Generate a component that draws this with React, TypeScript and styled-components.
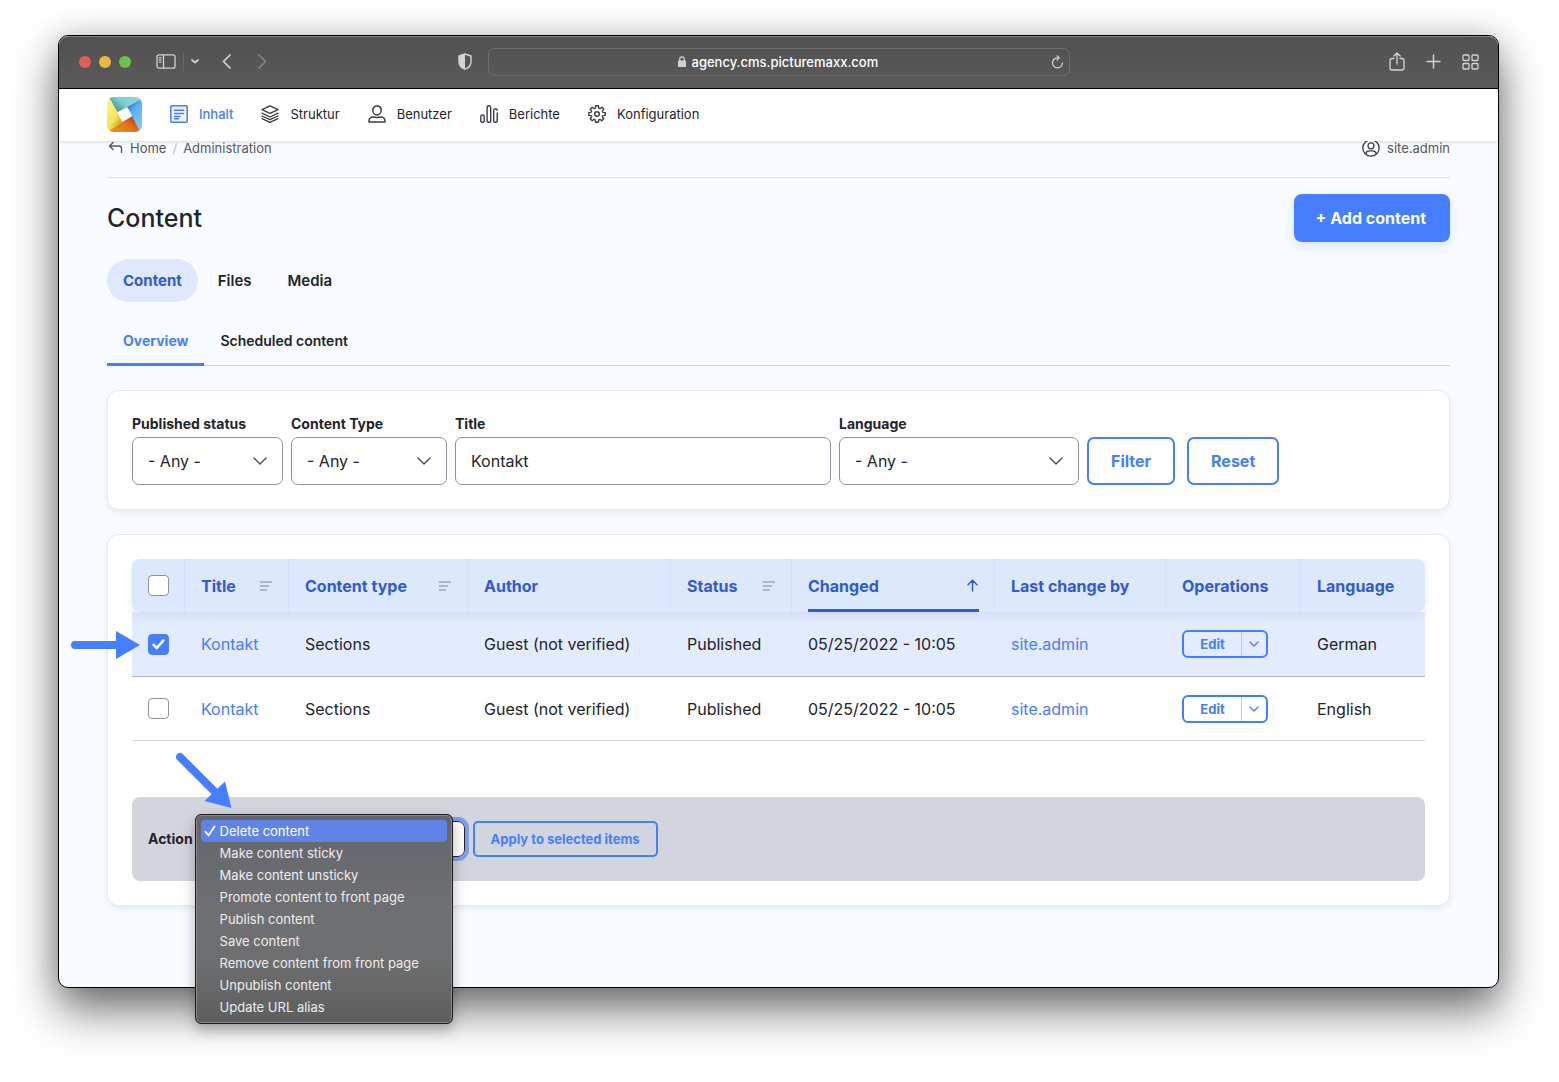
import React, { useState } from "react";
import styled, { createGlobalStyle, css } from "styled-components";

const blue = "#457eff";
const deepBlue = "#3059d6";
const ink = "#232429";

const GlobalStyle = createGlobalStyle`
  *, *::before, *::after { box-sizing: border-box; }
  body {
    margin: 0;
    background: #fff;
    color: ${ink};
    font-family: Inter, "Noto Sans", "Liberation Sans", sans-serif;
    font-size: 16px;
  }
  a { color: inherit; text-decoration: none; }
  button, input, select { font: inherit; color: inherit; }
  button { cursor: pointer; }
  svg { display: block; flex: none; }
`;

const Desktop = styled.div`
  padding: 35px 60px 94px 58px;
`;

const BrowserWindow = styled.div`
  border: 1px solid #000;
  border-radius: 10px;
  background: #f8fbff;
  box-shadow: 0 22px 46px rgba(0, 0, 0, 0.56), 0 0 30px rgba(0, 0, 0, 0.14);
`;

/* Browser chrome */

const Toolbar = styled.div`
  display: grid;
  grid-template-columns: 1fr minmax(300px, 582px) 1fr;
  align-items: center;
  height: 53px;
  padding-bottom: 1px;
  border-bottom: 1px solid #000;
  border-radius: 9px 9px 0 0;
  background: linear-gradient(#505050, #5b5b5b);
  box-shadow: inset 0 1px 0 #858585;
  color: #d4d4d4;
`;

const ToolbarStart = styled.div`
  display: flex;
  align-items: center;
  padding: 0 16px 0 20px;
`;

const Lights = styled.div`
  display: flex;
  gap: 8px;
  margin-right: 25px;
`;

const Light = styled.button<{ $color: string }>`
  width: 12px;
  height: 12px;
  padding: 0;
  border: 0;
  border-radius: 50%;
  background: ${(p) => p.$color};
`;

const IconButton = styled.button<{ $dim?: boolean }>`
  padding: 0;
  border: 0;
  background: none;
  color: ${(p) => (p.$dim ? "#858585" : "inherit")};
`;

const SidebarGroup = styled.div`
  display: flex;
  align-items: center;
  gap: 7px;
  margin-right: 22px;
`;

const Separator = styled.span`
  width: 1px;
  height: 18px;
  background: #6a6a6a;
`;

const HistoryGroup = styled.div`
  display: flex;
  gap: 25px;
  margin-right: auto;
`;

const AddressBar = styled.div`
  display: grid;
  grid-template-columns: 1fr auto 1fr;
  align-items: center;
  height: 28px;
  padding: 0 5px;
  border: 1px solid #6e6e6e;
  border-radius: 7px;
`;

const AddressCore = styled.label`
  grid-column: 2;
  display: flex;
  align-items: center;
  gap: 6px;
`;

const AddressInput = styled.input`
  width: 188px;
  padding: 0;
  border: 0;
  outline: 0;
  background: none;
  color: #fff;
  font-size: 13px;
  font-weight: 500;
  line-height: 18px;
`;

const ReloadButton = styled(IconButton)`
  justify-self: end;
`;

const ToolbarEnd = styled.div`
  display: flex;
  justify-content: flex-end;
  align-items: center;
  gap: 21px;
  padding-right: 19px;
`;

/* Admin navigation */

const AdminNav = styled.nav`
  position: relative;
  z-index: 1;
  display: flex;
  align-items: center;
  gap: 28px;
  height: 52px;
  padding: 0 48px 2px;
  background: #fff;
  box-shadow: 0 1px 3px rgba(20, 30, 60, 0.16);
`;

const NavItem = styled.a<{ $active?: boolean }>`
  display: flex;
  align-items: center;
  gap: 11px;
  color: ${(p) => (p.$active ? blue : ink)};
  font-size: 13px;
  font-weight: ${(p) => (p.$active ? 500 : 400)};
  svg { color: ${(p) => (p.$active ? blue : "#3c3d44")}; }
`;

/* Page */

const Page = styled.main`
  padding: 0 48px 81px;
`;

const TopLine = styled.div`
  display: flex;
  justify-content: space-between;
  align-items: center;
  margin-top: -4px;
  padding-bottom: 18px;
  border-bottom: 1px solid #dfe1e7;
  color: #55565e;
  font-size: 13px;
  line-height: 22px;
`;

const Crumbs = styled.nav`
  display: flex;
  align-items: center;
  gap: 6px;
`;

const Slash = styled.span`
  color: #bfc1c8;
`;

const UserLink = styled.a`
  display: flex;
  align-items: center;
  gap: 7px;
`;

const TitleRow = styled.div`
  display: flex;
  justify-content: space-between;
  align-items: center;
  padding: 16px 0 17px;
`;

const PageTitle = styled.h1`
  margin: 0;
  font-size: 25px;
  font-weight: 500;
  line-height: 34px;
`;

const PrimaryButton = styled.button`
  height: 48px;
  padding: 0 24px 0 22px;
  border: 0;
  border-radius: 8px;
  background: ${blue};
  box-shadow: 0 4px 10px rgba(69, 126, 255, 0.18);
  color: #fff;
  font-weight: 700;
`;

const Pills = styled.nav`
  display: flex;
  gap: 4px;
`;

const Pill = styled.a<{ $active?: boolean }>`
  padding: 0 16px;
  border-radius: 22px;
  background: ${(p) => (p.$active ? "#dfe8ff" : "transparent")};
  color: ${(p) => (p.$active ? deepBlue : ink)};
  font-size: 15px;
  font-weight: ${(p) => (p.$active ? 700 : 600)};
  line-height: 43px;
`;

const Tabs = styled.nav`
  display: flex;
  margin: 16px 0 24px;
  box-shadow: inset 0 -1px 0 #cfd2da;
`;

const Tab = styled.a<{ $active?: boolean }>`
  height: 48px;
  padding: 0 16px;
  border-bottom: 3px solid ${(p) => (p.$active ? blue : "transparent")};
  color: ${(p) => (p.$active ? blue : ink)};
  font-size: 14px;
  font-weight: ${(p) => (p.$active ? 700 : 600)};
  line-height: 46px;
`;

const Card = styled.section`
  padding: 24px;
  border: 1px solid #e8eaf0;
  border-radius: 12px;
  background: #fff;
  box-shadow: 0 3px 6px rgba(40, 60, 110, 0.08);
  & + & { margin-top: 24px; }
`;

const FilterForm = styled.form`
  display: flex;
  align-items: flex-end;
  gap: 8px;
`;

const Field = styled.div<{ $width: number }>`
  display: flex;
  flex-direction: column;
  gap: 4px;
  flex: 0 1 ${(p) => p.$width}px;
`;

const FieldLabel = styled.label`
  font-size: 14px;
  font-weight: 700;
  line-height: 18px;
  white-space: nowrap;
`;

const control = css`
  width: 100%;
  height: 48px;
  padding: 0 15px;
  border: 1px solid #8e929c;
  border-radius: 7px;
  background: #fff;
  outline: 0;
`;

const TextInput = styled.input`
  ${control}
`;

const SelectBox = styled.div`
  display: grid;
  align-items: center;
  & > * { grid-area: 1 / 1; }
  & > svg { justify-self: end; margin-right: 16px; pointer-events: none; color: #55565e; }
`;

const Select = styled.select`
  ${control}
  appearance: none;
`;

const OutlineButton = styled.button<{ $small?: boolean }>`
  height: ${(p) => (p.$small ? 36 : 48)}px;
  padding: 0 ${(p) => (p.$small ? 16 : 22)}px;
  border: 2px solid ${blue};
  border-radius: ${(p) => (p.$small ? 5 : 7)}px;
  background: ${(p) => (p.$small ? "transparent" : "#fff")};
  color: ${blue};
  font-size: ${(p) => (p.$small ? 13 : 16)}px;
  font-weight: 700;
  white-space: nowrap;
`;

const ButtonPair = styled.div`
  display: flex;
  gap: 12px;
`;

/* Table */

const Table = styled.table`
  width: 100%;
  table-layout: fixed;
  border-collapse: separate;
  border-spacing: 0;
  thead {
    position: relative;
    z-index: 1;
  }
`;

const Col = styled.col<{ $width?: number }>`
  width: ${(p) => (p.$width ? `${p.$width}px` : "auto")};
`;

const HeadRow = styled.tr`
  border-radius: 8px;
  box-shadow: 0 4px 8px rgba(60, 80, 150, 0.1);
`;

const HeadCell = styled.th`
  height: 53px;
  padding: 0 15px 0 16px;
  border-left: 1px solid #d3e0f8;
  background: #dce9fd;
  color: ${deepBlue};
  font-weight: 700;
  text-align: left;
  white-space: nowrap;
  &:first-child { border-left-color: #dce9fd; border-radius: 8px 0 0 8px; padding-left: 15px; }
  &:last-child { border-radius: 0 8px 8px 0; }
`;

const SortLink = styled.a<{ $sorted?: boolean }>`
  display: flex;
  justify-content: space-between;
  align-items: center;
  height: 53px;
  border-top: 3px solid transparent;
  border-bottom: 3px solid ${(p) => (p.$sorted ? deepBlue : "transparent")};
`;

const BodyRow = styled.tr<{ $selected: boolean }>`
  background: ${(p) => (p.$selected ? "#e3ebff" : "#fff")};
  td { border-bottom: 1px solid ${(p) => (p.$selected ? "#b3b6c0" : "#d5d6db")}; }
  &:first-child td { height: 65px; }
`;

const Cell = styled.td`
  position: relative;
  height: 64px;
  padding: 0 0 0 17px;
  white-space: nowrap;
  &:first-child { padding-left: 16px; }
`;

const CellLink = styled.a`
  color: ${blue};
`;

const Checkbox = styled.input`
  display: block;
  appearance: none;
  width: 21px;
  height: 21px;
  margin: 0;
  border: 1px solid #8e929c;
  border-radius: 4px;
  background: #fff;
  &:checked { border-color: ${blue}; background: ${blue}; }
`;

const CheckStack = styled.span`
  display: grid;
  width: 21px;
  & > * { grid-area: 1 / 1; }
  & > svg { place-self: center; pointer-events: none; color: #fff; }
`;

const SplitButton = styled.div`
  display: inline-flex;
  height: 28px;
  border: 2px solid ${blue};
  border-radius: 6px;
  color: ${blue};
  vertical-align: middle;
`;

const SplitMain = styled.button`
  width: 57px;
  padding: 0;
  border: 0;
  background: none;
  font-size: 13px;
  font-weight: 700;
`;

const SplitToggle = styled.button`
  display: grid;
  place-items: center;
  width: 25px;
  padding: 0;
  border: 0;
  border-left: 1px solid #b3c8fb;
  background: none;
`;

const RowArrow = styled.svg`
  position: absolute;
  left: -61px;
  top: 19px;
`;

/* Bulk actions */

const BulkForm = styled.form`
  position: relative;
  display: flex;
  align-items: center;
  gap: 8px;
  margin-top: 56px;
  padding: 24px 16px;
  border-radius: 8px;
  background: #d3d5de;
`;

const BulkArrow = styled.svg`
  position: absolute;
  left: 42px;
  top: -46px;
  z-index: 3;
`;

const BulkField = styled.div`
  position: relative;
`;

const BulkSelect = styled.select`
  display: block;
  appearance: none;
  width: 264px;
  height: 36px;
  padding: 0 14px;
  border: 1px solid ${ink};
  border-radius: 7px;
  outline: 4px solid #7c9fec;
  outline-offset: 0;
  background: #fff;
  font-size: 13px;
`;

const Menu = styled.div`
  position: absolute;
  z-index: 2;
  left: -6px;
  top: -7px;
  width: 258px;
  padding: 5px;
  border: 1px solid #1c1c1e;
  border-radius: 6px;
  background: linear-gradient(#64666d, #6f7072 50%, #6d6e6f 70%, #5e5e5e);
  box-shadow: inset 0 0 0 1px #8a8a8c, 0 6px 14px rgba(0, 0, 0, 0.28);
`;

const MenuOption = styled.button<{ $active: boolean }>`
  display: grid;
  grid-template-columns: 16px 1fr;
  align-items: center;
  width: 100%;
  height: 22px;
  padding: 0 3px;
  border: 0;
  border-radius: 4px;
  background: ${(p) => (p.$active ? "#6084e6" : "none")};
  color: ${(p) => (p.$active ? "#fff" : "#ececec")};
  font-size: 13px;
  text-align: left;
  span { grid-column: 2; white-space: nowrap; }
  svg { grid-column: 1; grid-row: 1; }
`;

/* Icons */

type StrokeProps = { w: number; h: number; d: string; sw?: number };

const Stroke = ({ w, h, d, sw = 1.5 }: StrokeProps) => (
  <svg width={w} height={h} viewBox={`0 0 ${w} ${h}`} fill="none" stroke="currentColor" strokeWidth={sw} strokeLinecap="round" strokeLinejoin="round" aria-hidden="true">
    <path d={d} />
  </svg>
);

const Logo = () => (
  <svg width="35" height="35" viewBox="0 0 105 105" role="img" aria-label="picturemaxx">
    <defs>
      <clipPath id="logoClip"><rect width="105" height="105" rx="20" /></clipPath>
      <linearGradient id="lgTeal" x1="0.1" y1="0.6" x2="0.9" y2="0.2"><stop offset="0" stopColor="#3f8f96" /><stop offset="0.45" stopColor="#7fcfd1" /><stop offset="1" stopColor="#86d6d8" /></linearGradient>
      <linearGradient id="lgBlue" x1="0.2" y1="0" x2="0.6" y2="0.8"><stop offset="0" stopColor="#2458a8" /><stop offset="0.45" stopColor="#5aaef5" /><stop offset="1" stopColor="#74c4ff" /></linearGradient>
      <linearGradient id="lgOrange" x1="0.95" y1="0.2" x2="0.2" y2="0.7"><stop offset="0" stopColor="#b63d10" /><stop offset="0.5" stopColor="#e2701b" /><stop offset="1" stopColor="#e98a20" /></linearGradient>
      <linearGradient id="lgYellow" x1="0.7" y1="0.9" x2="0.2" y2="0.2"><stop offset="0" stopColor="#cda51c" /><stop offset="0.4" stopColor="#f7e257" /><stop offset="1" stopColor="#fbf07c" /></linearGradient>
    </defs>
    <g clipPath="url(#logoClip)">
      <path d="M0 0H105V8L60 32L31 45L8 6Z" fill="url(#lgTeal)" />
      <path d="M105 6V105H97L74 57L60 31Z" fill="url(#lgBlue)" />
      <path d="M99 105H0V105L8 100L45 76L75 57Z" fill="url(#lgOrange)" />
      <path d="M0 105V0H5L31 44L46 75L8 100Z" fill="url(#lgYellow)" />
      <path d="M36 44L58 32Q61 31 63 34L74 54Q75 58 72 60L50 72Q46 74 44 71L34 50Q32 46 36 44Z" fill="#fff" />
    </g>
  </svg>
);

const ContentIcon = () => (
  <svg width="18" height="18" viewBox="0 0 18 18" fill="none" stroke="currentColor" strokeWidth="1.5" strokeLinecap="round" aria-hidden="true">
    <rect x="0.8" y="0.8" width="16.4" height="16.4" rx="1" fill="#eef3ff" />
    <path d="M4.5 5.2h9M4.5 8.4h9M4.5 11.4h5.5M4.5 13.8h4" />
  </svg>
);

const GearIcon = () => {
  const pts: string[] = [];
  for (let i = 0; i < 8; i++) {
    const a = (i * Math.PI) / 4;
    const at = (r: number, t: number) => `${(9 + r * Math.sin(t)).toFixed(2)} ${(9 - r * Math.cos(t)).toFixed(2)}`;
    pts.push(`${at(8.3, a - 0.17)} L${at(8.3, a + 0.17)} L${at(6.3, a + 0.27)} Q${at(5.7, a + 0.393)} ${at(6.3, a + 0.515)}`);
  }
  return (
    <svg width="18" height="18" viewBox="0 0 18 18" fill="none" stroke="currentColor" strokeWidth="1.4" strokeLinejoin="round" aria-hidden="true">
      <path d={`M${pts.join(" L")} Z`} />
      <circle cx="9" cy="9" r="2.3" />
    </svg>
  );
};

const UserIcon = () => (
  <svg width="18" height="18" viewBox="0 0 18 18" fill="none" stroke="#3c3d44" strokeWidth="1.3" aria-hidden="true">
    <circle cx="9" cy="9" r="8.2" />
    <circle cx="9" cy="6.8" r="3" />
    <path d="M3.6 15c.6-2.500 2-3.200 3.600-3.200h3.600c1.600 0 3 .7 3.600 3.200" />
  </svg>
);

const chevron = "M1 1L7 7L13 1";

const SortIcon = () => (
  <svg width="14" height="10" viewBox="0 0 14 10" stroke="#9fa8b8" strokeWidth="1.6" aria-hidden="true">
    <path d="M0.800 1H13M0.800 5H10M0.800 9H8" />
  </svg>
);

/* Data */

const navItems = [
  { label: "Inhalt", icon: <ContentIcon />, active: true },
  { label: "Struktur", icon: <Stroke w={18} h={18} sw={1.3} d="M9 0.800L17 4.600L9 8.400L1 4.600ZM1 8.200L9 12L17 8.200M1 11L9 14.700L17 11M1 13.700L9 17.300L17 13.700" /> },
  { label: "Benutzer", icon: <Stroke w={18} h={18} sw={1.5} d="M9 1C6.400 1 4.800 2.900 4.800 5.300C4.800 7.900 6.600 10 9 10C11.400 10 13.200 7.900 13.200 5.300C13.200 2.900 11.600 1 9 1ZM1 17V15.800C1 13.600 2.800 12 5 12C6.500 12 7.500 12.600 9 12.600C10.500 12.600 11.500 12 13 12C15.200 12 17 13.600 17 15.800V17Z" /> },
  { label: "Berichte", icon: <Stroke w={18} h={18} sw={1.4} d="M0.800 16V11.700A1.700 1.700 0 0 1 4.200 11.700V16A1.200 1.200 0 0 1 3 17.200H2A1.200 1.200 0 0 1 0.800 16ZM7.100 16V2.500A1.800 1.800 0 0 1 10.700 2.500V16A1.200 1.200 0 0 1 9.500 17.200H8.300A1.200 1.200 0 0 1 7.100 16ZM17.200 5.200A1.700 1.700 0 0 0 13.700 6V16A1.200 1.200 0 0 0 14.900 17.200H16A1.200 1.200 0 0 0 17.200 16V8" /> },
  { label: "Konfiguration", icon: <GearIcon /> },
];

const columns: { label: string; width?: number; sort?: "none" | "asc" }[] = [
  { label: "Title", width: 104, sort: "none" },
  { label: "Content type", width: 179, sort: "none" },
  { label: "Author", width: 203 },
  { label: "Status", width: 121, sort: "none" },
  { label: "Changed", width: 203, sort: "asc" },
  { label: "Last change by", width: 171 },
  { label: "Operations", width: 135 },
  { label: "Language" },
];

const rows = ["German", "English"];

const actions = [
  "Delete content",
  "Make content sticky",
  "Make content unsticky",
  "Promote content to front page",
  "Publish content",
  "Save content",
  "Remove content from front page",
  "Unpublish content",
  "Update URL alias",
];

const AnySelect = ({ id, label, width }: { id: string; label: string; width: number }) => (
  <Field $width={width}>
    <FieldLabel htmlFor={id}>{label}</FieldLabel>
    <SelectBox>
      <Select id={id}><option>- Any -</option></Select>
      <Stroke w={14} h={8} sw={1.5} d={chevron} />
    </SelectBox>
  </Field>
);

const BrowserToolbar = () => (
  <Toolbar>
    <ToolbarStart>
      <Lights>
        <Light $color="#e25f57" aria-label="Close" />
        <Light $color="#ecb83e" aria-label="Minimize" />
        <Light $color="#6dc44d" aria-label="Zoom" />
      </Lights>
      <SidebarGroup>
        <IconButton aria-label="Sidebar">
          <Stroke w={20} h={15} sw={1.3} d="M3 0.800H17A2 2 0 0 1 19 2.800V12.200A2 2 0 0 1 17 14.200H3A2 2 0 0 1 1 12.200V2.800A2 2 0 0 1 3 0.800ZM7.500 1V14M3.300 3.700H5M3.300 5.900H5M3.300 8.100H5" />
        </IconButton>
        <Separator />
        <IconButton aria-label="Tab groups"><Stroke w={8} h={5} sw={1.7} d="M1 1L4 3.700L7 1" /></IconButton>
      </SidebarGroup>
      <HistoryGroup>
        <IconButton aria-label="Back"><Stroke w={11} h={15} sw={1.7} d="M9 1L2.500 7.500L9 14" /></IconButton>
        <IconButton aria-label="Forward" $dim><Stroke w={11} h={15} sw={1.7} d="M2 1L8.500 7.500L2 14" /></IconButton>
      </HistoryGroup>
      <IconButton aria-label="Privacy report">
        <svg width="14" height="17" viewBox="0 0 14 17" aria-hidden="true">
          <path d="M7 1L13 3V9C13 12.500 10 15 7 16.200C4 15 1 12.500 1 9V3Z" fill="none" stroke="currentColor" strokeWidth="1.400" strokeLinejoin="round" />
          <path d="M7 1L1 3V9C1 12.500 4 15 7 16.200Z" fill="currentColor" />
        </svg>
      </IconButton>
    </ToolbarStart>
    <AddressBar>
      <AddressCore>
        <svg width="8" height="11" viewBox="0 0 8 11" aria-hidden="true">
          <rect x="0" y="4.500" width="8" height="6.500" rx="1" fill="currentColor" />
          <path d="M1.800 5V3A2.200 2.200 0 0 1 6.200 3V5" fill="none" stroke="currentColor" strokeWidth="1.200" />
        </svg>
        <AddressInput aria-label="Address" defaultValue="agency.cms.picturemaxx.com" />
      </AddressCore>
      <ReloadButton aria-label="Reload">
        <Stroke w={13} h={14} sw={1.2} d="M6.500 2.800A5 5 0 1 0 11.500 7.800M6 0.800L8.300 2.900L6 5.200" />
      </ReloadButton>
    </AddressBar>
    <ToolbarEnd>
      <IconButton aria-label="Share"><Stroke w={16} h={20} sw={1.3} d="M5 6.500H3A2 2 0 0 0 1 8.500V16A2 2 0 0 0 3 18H13A2 2 0 0 0 15 16V8.500A2 2 0 0 0 13 6.500H11M8 12V1M4.800 4L8 1L11.200 4" /></IconButton>
      <IconButton aria-label="New tab"><Stroke w={15} h={15} sw={1.5} d="M7.500 1V14M1 7.500H14" /></IconButton>
      <IconButton aria-label="Tab overview"><Stroke w={17} h={16} sw={1.3} d="M2 1H6A1 1 0 0 1 7 2V5.500A1 1 0 0 1 6 6.500H2A1 1 0 0 1 1 5.500V2A1 1 0 0 1 2 1ZM11 1H15A1 1 0 0 1 16 2V5.500A1 1 0 0 1 15 6.500H11A1 1 0 0 1 10 5.500V2A1 1 0 0 1 11 1ZM2 9.500H6A1 1 0 0 1 7 10.500V14A1 1 0 0 1 6 15H2A1 1 0 0 1 1 14V10.500A1 1 0 0 1 2 9.500ZM11 9.500H15A1 1 0 0 1 16 10.500V14A1 1 0 0 1 15 15H11A1 1 0 0 1 10 14V10.500A1 1 0 0 1 11 9.500Z" /></IconButton>
    </ToolbarEnd>
  </Toolbar>
);

export default function App() {
  const [selected, setSelected] = useState([true, false]);
  const [action, setAction] = useState(actions[0]);
  const toggle = (i: number) => setSelected((s) => s.map((v, j) => (j === i ? !v : v)));

  return (
    <>
      <GlobalStyle />
      <Desktop>
        <BrowserWindow>
          <BrowserToolbar />
          <AdminNav>
            <a href="#home"><Logo /></a>
            {navItems.map((n) => (
              <NavItem key={n.label} href={`#${n.label}`} $active={n.active}>{n.icon}{n.label}</NavItem>
            ))}
          </AdminNav>
          <Page>
            <TopLine>
              <Crumbs aria-label="Breadcrumb">
                <Stroke w={17} h={14} sw={1.4} d="M6 1.500L2.500 5L6 8.500M2.500 5H12A2.500 2.500 0 0 1 14.500 7.500V11.500" />
                <a href="#home">Home</a>
                <Slash>/</Slash>
                <a href="#administration">Administration</a>
              </Crumbs>
              <UserLink href="#user"><UserIcon />site.admin</UserLink>
            </TopLine>

            <TitleRow>
              <PageTitle>Content</PageTitle>
              <PrimaryButton>+ Add content</PrimaryButton>
            </TitleRow>

            <Pills>
              <Pill href="#content" $active>Content</Pill>
              <Pill href="#files">Files</Pill>
              <Pill href="#media">Media</Pill>
            </Pills>

            <Tabs>
              <Tab href="#overview" $active>Overview</Tab>
              <Tab href="#scheduled">Scheduled content</Tab>
            </Tabs>

            <Card>
              <FilterForm onSubmit={(e) => e.preventDefault()}>
                <AnySelect id="status" label="Published status" width={151} />
                <AnySelect id="type" label="Content Type" width={156} />
                <Field $width={376}>
                  <FieldLabel htmlFor="title">Title</FieldLabel>
                  <TextInput id="title" defaultValue="Kontakt" />
                </Field>
                <AnySelect id="language" label="Language" width={240} />
                <ButtonPair>
                  <OutlineButton type="submit">Filter</OutlineButton>
                  <OutlineButton type="reset">Reset</OutlineButton>
                </ButtonPair>
              </FilterForm>
            </Card>

            <Card>
              <Table>
                <colgroup>
                  <Col $width={52} />
                  {columns.map((c) => <Col key={c.label} $width={c.width} />)}
                </colgroup>
                <thead>
                  <HeadRow>
                    <HeadCell><Checkbox type="checkbox" aria-label="Select all rows" /></HeadCell>
                    {columns.map((c) => (
                      <HeadCell key={c.label}>
                        {c.sort ? (
                          <SortLink href={`#sort-${c.label}`} $sorted={c.sort === "asc"}>
                            {c.label}
                            {c.sort === "asc" ? <Stroke w={14} h={13} sw={1.5} d="M7.500 12V1.500M3 5.800L7.500 1.300L12 5.800" /> : <SortIcon />}
                          </SortLink>
                        ) : c.label}
                      </HeadCell>
                    ))}
                  </HeadRow>
                </thead>
                <tbody>
                  {rows.map((language, i) => (
                    <BodyRow key={language} $selected={selected[i]}>
                      <Cell>
                        <CheckStack>
                          <Checkbox type="checkbox" aria-label={`Select Kontakt ${language}`} checked={selected[i]} onChange={() => toggle(i)} />
                          {selected[i] && <Stroke w={15} h={13} sw={2.6} d="M2.500 6.800L5.800 10L12.300 2.500" />}
                        </CheckStack>
                        {i === 0 && (
                          <RowArrow width="69" height="28" viewBox="0 0 69 28" aria-hidden="true">
                            <path d="M4 14H48" stroke={blue} strokeWidth="8" strokeLinecap="round" />
                            <path d="M45 0L69 14L45 28Z" fill={blue} />
                          </RowArrow>
                        )}
                      </Cell>
                      <Cell><CellLink href="#kontakt">Kontakt</CellLink></Cell>
                      <Cell>Sections</Cell>
                      <Cell>Guest (not verified)</Cell>
                      <Cell>Published</Cell>
                      <Cell>05/25/2022 - 10:05</Cell>
                      <Cell><CellLink href="#site-admin">site.admin</CellLink></Cell>
                      <Cell>
                        <SplitButton>
                          <SplitMain>Edit</SplitMain>
                          <SplitToggle aria-label="More operations"><Stroke w={10} h={6} sw={1.4} d="M1 1L5 5L9 1" /></SplitToggle>
                        </SplitButton>
                      </Cell>
                      <Cell>{language}</Cell>
                    </BodyRow>
                  ))}
                </tbody>
              </Table>

              <BulkForm onSubmit={(e) => e.preventDefault()}>
                <FieldLabel htmlFor="action">Action</FieldLabel>
                <BulkField>
                  <BulkSelect id="action" value={action} onChange={(e) => setAction(e.target.value)}>
                    {actions.map((a) => <option key={a}>{a}</option>)}
                  </BulkSelect>
                  <Menu role="menu">
                    {actions.map((a) => (
                      <MenuOption key={a} type="button" role="menuitemradio" aria-checked={a === action} $active={a === action} onClick={() => setAction(a)}>
                        {a === action && <Stroke w={12} h={12} sw={1.8} d="M1.500 6.800L4.500 10.500L10.500 1.500" />}
                        <span>{a}</span>
                      </MenuOption>
                    ))}
                  </Menu>
                </BulkField>
                <OutlineButton type="submit" $small>Apply to selected items</OutlineButton>
                <BulkArrow width="60" height="60" viewBox="0 0 60 60" aria-hidden="true">
                  <path d="M6 6L44 44" stroke={blue} strokeWidth="8" strokeLinecap="round" />
                  <path d="M51 30.500L57.500 57L30.500 50Z" fill={blue} />
                </BulkArrow>
              </BulkForm>
            </Card>
          </Page>
        </BrowserWindow>
      </Desktop>
    </>
  );
}
